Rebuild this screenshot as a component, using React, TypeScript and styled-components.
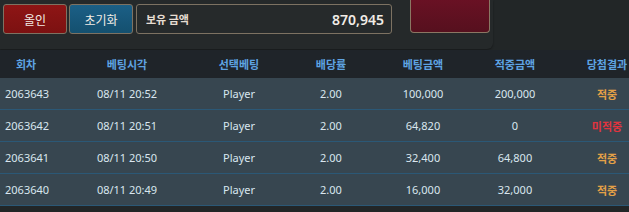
import React from "react";
import styled, { createGlobalStyle } from "styled-components";

const Global = createGlobalStyle`
  html, body { margin: 0; padding: 0; background: #222627; overflow: hidden; }
  body { font-family: "Noto Sans CJK KR", "Noto Sans", sans-serif; width: 629px; height: 212px; }
  * { box-sizing: border-box; }
`;

const Page = styled.div`
  width: 629px;
  height: 212px;
  display: flex;
  flex-direction: column;
  background: #222627;
  overflow: hidden;
`;

const TopPanel = styled.div`
  width: 493px;
  height: 49px;
  background: #25292a;
  border-bottom-right-radius: 6px;
  box-shadow: 0 1px 2px rgba(0, 0, 0, 0.35);
  display: flex;
  align-items: flex-start;
  padding: 4px 0 0 3px;
  gap: 2px;
`;

const ActionButton = styled.button<{ $tone: "red" | "blue" }>`
  width: 64px;
  height: 30px;
  border: 1px solid #7d7262;
  border-radius: 3px;
  color: #f2ece6;
  font-family: "Noto Sans CJK KR", sans-serif;
  font-size: 12px;
  padding: 0;
  background: ${(p) =>
    p.$tone === "red"
      ? "linear-gradient(#8e1515, #7c1111)"
      : "linear-gradient(#1b5f86, #14506f)"};
`;

const Balance = styled.div`
  margin-left: 1px;
  width: 256px;
  height: 30px;
  border: 1px solid #7d7262;
  border-radius: 3px;
  background: #262a2b;
  display: flex;
  align-items: center;
  justify-content: space-between;
  padding: 0 7px 0 9px;
`;

const BalanceLabel = styled.span`
  color: #e6ddd2;
  font-size: 11px;
  font-weight: 700;
`;

const BalanceValue = styled.span`
  color: #f1ece6;
  font-family: "Noto Sans", sans-serif;
  font-size: 14px;
  font-weight: 600;
`;

const RedBlock = styled.div`
  margin-left: 16px;
  margin-top: -6px;
  width: 80px;
  height: 35px;
  border: 1px solid #8a7763;
  border-top: none;
  border-radius: 0 0 4px 4px;
  background: linear-gradient(#6a1124, #56101e);
`;

const Table = styled.div`
  margin-top: 1px;
  display: flex;
  flex-direction: column;
  width: 663px;
`;

const cols = "71px 112px 112px 72px 112px 72px 112px";

const HeadRow = styled.div`
  display: grid;
  grid-template-columns: ${cols};
  height: 28px;
  align-items: center;
  background: #1f2429;
`;

const HeadCell = styled.div<{ $left?: boolean }>`
  color: #5ea3e2;
  font-size: 11px;
  font-weight: 700;
  white-space: nowrap;
  text-align: ${(p) => (p.$left ? "left" : "center")};
  padding-left: ${(p) => (p.$left ? "16px" : "0")};
`;

const Row = styled.div`
  display: grid;
  grid-template-columns: ${cols};
  height: 32px;
  align-items: center;
  background: #374650;
  border-bottom: 1px solid #2b5876;
`;

const Cell = styled.div<{ $left?: boolean; $color?: string; $bold?: boolean }>`
  color: ${(p) => p.$color || "#d9e6ef"};
  font-family: "Noto Sans", "Noto Sans CJK KR", sans-serif;
  font-size: 11px;
  font-weight: ${(p) => (p.$bold ? 700 : 400)};
  white-space: nowrap;
  text-align: ${(p) => (p.$left ? "left" : "center")};
  padding-left: ${(p) => (p.$left ? "5px" : "0")};
`;

const Filler = styled.div`
  flex: 1;
  height: 20px;
  background: #374650;
`;

const rows = [
  ["2063643", "08/11 20:52", "Player", "2.00", "100,000", "200,000", "적중"],
  ["2063642", "08/11 20:51", "Player", "2.00", "64,820", "0", "미적중"],
  ["2063641", "08/11 20:50", "Player", "2.00", "32,400", "64,800", "적중"],
  ["2063640", "08/11 20:49", "Player", "2.00", "16,000", "32,000", "적중"],
];

const headers = ["회차", "베팅시각", "선택베팅", "배당률", "베팅금액", "적중금액", "당첨결과"];

export default function App() {
  return (
    <Page>
      <Global />
      <TopPanel>
        <ActionButton $tone="red">올인</ActionButton>
        <ActionButton $tone="blue">초기화</ActionButton>
        <Balance>
          <BalanceLabel>보유 금액</BalanceLabel>
          <BalanceValue>870,945</BalanceValue>
        </Balance>
        <RedBlock />
      </TopPanel>
      <Table>
        <HeadRow>
          {headers.map((h, i) => (
            <HeadCell key={h} $left={i === 0}>
              {h}
            </HeadCell>
          ))}
        </HeadRow>
        {rows.map((r) => (
          <Row key={r[0]}>
            <Cell $left>{r[0]}</Cell>
            <Cell>{r[1]}</Cell>
            <Cell>{r[2]}</Cell>
            <Cell>{r[3]}</Cell>
            <Cell>{r[4]}</Cell>
            <Cell>{r[5]}</Cell>
            <Cell $bold $color={r[6] === "적중" ? "#e3a047" : "#e0343f"}>
              {r[6]}
            </Cell>
          </Row>
        ))}
        <Filler />
      </Table>
    </Page>
  );
}
